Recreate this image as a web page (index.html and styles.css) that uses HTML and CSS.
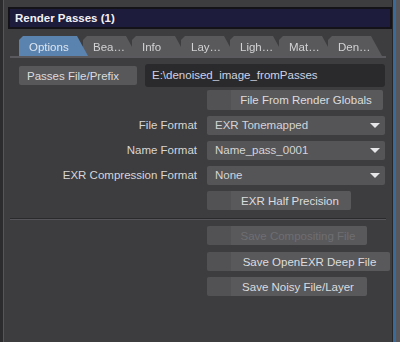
FILE: index.html
```html
<!DOCTYPE html>
<html lang="en">
<head>
  <meta charset="UTF-8">
  <meta name="viewport" content="width=device-width, initial-scale=1.0">
  <title>Render Passes</title>
  <link rel="stylesheet" href="styles.css">
</head>
<body>
  <div class="frame">
    <main class="panel">
      <header class="title">Render Passes (1)</header>

      <nav class="tabs">
        <span class="tab active t1">Options</span>
        <span class="tab t2">Bea…</span>
        <span class="tab t3">Info</span>
        <span class="tab t4">Lay…</span>
        <span class="tab t5">Ligh…</span>
        <span class="tab t6">Mat…</span>
        <span class="tab t7">Den…</span>
      </nav>

      <section class="form">
        <div class="row-prefix">
          <button class="btn plain">Passes File/Prefix</button>
          <div class="input">E:\denoised_image_fromPasses</div>
        </div>

        <div class="row r-globals">
          <span class="label"></span>
          <button class="btn w-globals">File From Render Globals</button>
        </div>

        <div class="row">
          <span class="label">File Format</span>
          <div class="select">EXR Tonemapped<i class="arrow"></i></div>
        </div>
        <div class="row">
          <span class="label">Name Format</span>
          <div class="select">Name_pass_0001<i class="arrow"></i></div>
        </div>
        <div class="row">
          <span class="label">EXR Compression Format</span>
          <div class="select">None<i class="arrow"></i></div>
        </div>
        <div class="row">
          <span class="label"></span>
          <button class="btn w-half">EXR Half Precision</button>
        </div>

        <hr class="sep">

        <div class="row">
          <span class="label"></span>
          <button class="btn w-comp" disabled>Save Compositing File</button>
        </div>
        <div class="row r-deep">
          <span class="label"></span>
          <button class="btn w-deep">Save OpenEXR Deep File</button>
        </div>
        <div class="row">
          <span class="label"></span>
          <button class="btn w-comp">Save Noisy File/Layer</button>
        </div>
      </section>
    </main>
    <div class="edge"></div>
  </div>
</body>
</html>
```

FILE: styles.css
```css
body {
  margin: 0;
  width: 400px;
  height: 342px;
  overflow: hidden;
  background: #3d3d3f;
  font-family: "Liberation Sans", Arial, sans-serif;
  font-size: 11.5px;
  color: #d6d6d8;
}
.frame {
  display: flex;
  height: 342px;
}

/* main window */
.panel {
  width: 393px;
  border-left: 3px solid #2c2c2e;
  box-shadow: inset 1px 0 0 #55555a;
  border-right: 1px solid #262628;
  padding-top: 7px;
  box-sizing: border-box;
  display: flex;
  flex-direction: column;
}
.edge {
  width: 7px;
  background: linear-gradient(to right, #3a6a98 0 3px, #58585c 3px);
}

/* title bar */
.title {
  margin: 0 0 0 5px;
  height: 22px;
  box-sizing: border-box;
  border: 2px solid #141418;
  background: #1e1c3c;
  color: #f2f2f6;
  font-weight: bold;
  font-size: 11.5px;
  line-height: 18px;
  padding-left: 5px;
}

/* tabs */
.tabs {
  display: flex;
  margin: 7px 6px 0 7px;
  padding-left: 9px;
  border-bottom: 2px solid #5a5a5e;
  height: 20px;
}
.tab {
  position: relative;
  width: 54px;
  height: 20px;
  margin-left: -5px;
  padding-left: 10px;
  box-sizing: border-box;
  line-height: 22px;
  background: #59595c;
  color: #d2d2d4;
  clip-path: polygon(0 4px, 4px 0, calc(100% - 11px) 0, 100% 100%, 0 100%);
  filter: drop-shadow(1px 0 0 #333);
}
.tab.active {
  width: 69px;
  margin-left: 0;
  background: #5b83b0;
  color: #dde6f0;
}
.t1 { z-index: 7; }
.t2 { z-index: 6; }
.t3 { z-index: 5; }
.t4 { z-index: 4; }
.t5 { z-index: 3; }
.t6 { z-index: 2; }
.t7 { z-index: 1; }

/* form */
.form {
  display: flex;
  flex-direction: column;
  padding-left: 7px;
  gap: 6px;
}
.row-prefix {
  display: flex;
  align-items: center;
  gap: 8px;
  margin-top: 6px;
  padding-left: 9px;
  height: 23px;
}
.row {
  display: flex;
  gap: 10px;
  height: 19px;
}
.r-globals {
  margin-top: -3px;
  height: 20px;
}
.label {
  width: 187px;
  text-align: right;
  line-height: 19px;
  flex: none;
}

.btn {
  font: inherit;
  color: #dcdcde;
  border: none;
  border-radius: 2px;
  height: 19px;
  padding: 0 0 0 22px;
  background: linear-gradient(to right, #525255 0 24px, #59595c 24px);
  text-align: center;
  flex: none;
}
.btn:disabled {
  color: #6e6e71;
}
.btn.plain {
  width: 118px;
  padding: 0 0 0 8px;
  text-align: left;
  background: #58585b;
}
.w-globals { width: 176px; height: 20px; }
.w-half { width: 144px; }
.w-comp { width: 160px; }
.w-deep { width: 183px; }

.input {
  width: 240px;
  height: 23px;
  box-sizing: border-box;
  background: #2a2a2d;
  border-radius: 3px;
  padding-left: 7px;
  line-height: 23px;
  color: #cfd2e2;
}

.select {
  position: relative;
  width: 178px;
  box-sizing: border-box;
  background: #555558;
  border-radius: 2px;
  padding-left: 8px;
  line-height: 19px;
  color: #d4d4d6;
}
.arrow {
  position: absolute;
  right: 5px;
  top: 7px;
  width: 0;
  height: 0;
  border-left: 5px solid transparent;
  border-right: 5px solid transparent;
  border-top: 5px solid #e6e6e8;
}

.sep {
  margin: 2px 6px 1px 0;
  border: none;
  height: 1px;
  background: #2a2a2c;
  box-shadow: 0 1px 0 #56565a;
}
.r-deep { margin-top: 1px; }
```
